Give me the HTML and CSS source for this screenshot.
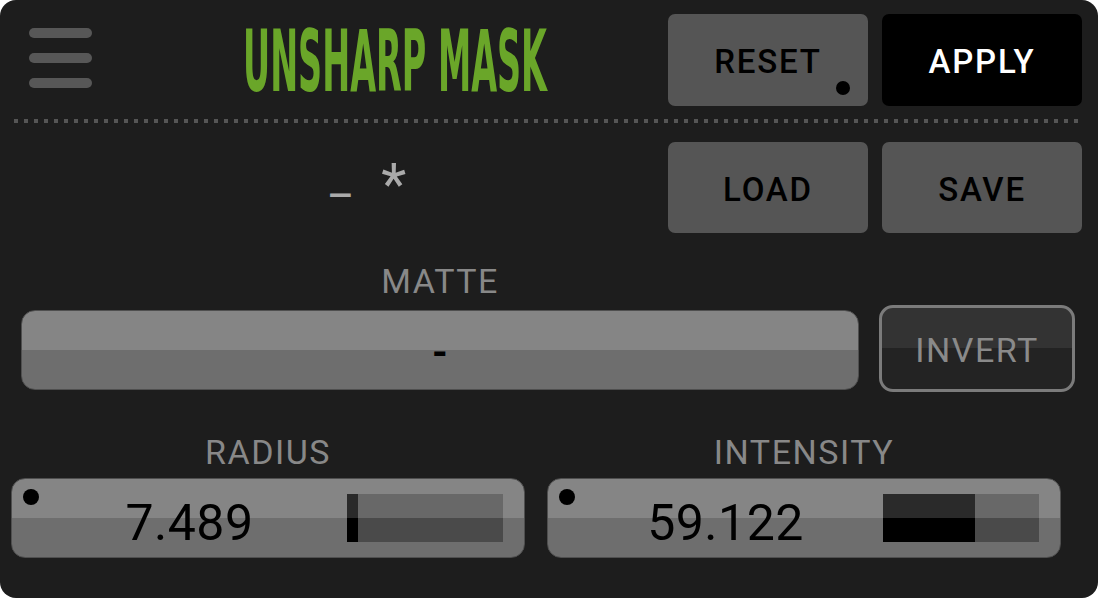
FILE: index.html
```html
<!DOCTYPE html>
<html>
<head>
<meta charset="utf-8">
<link rel="stylesheet" href="styles.css">
</head>
<body>
<div class="panel">
  <div class="header">
    <div class="hamburger"><span></span><span></span><span></span></div>
    <div class="title"><span class="title-text">UNSHARP MASK</span></div>
    <div class="btns">
      <div class="btn">RESET<span class="btn-dot"></span></div>
      <div class="btn btn-apply">APPLY</div>
    </div>
  </div>
  <div class="divider"></div>
  <div class="row2">
    <div class="preset"><span class="preset-name">_</span> <span class="preset-mod">*</span></div>
    <div class="btns">
      <div class="btn">LOAD</div>
      <div class="btn">SAVE</div>
    </div>
  </div>
  <div class="matte">
    <div class="matte-col">
      <div class="label">MATTE</div>
      <div class="field matte-field">-</div>
    </div>
    <div class="invert">INVERT</div>
  </div>
  <div class="sliders">
    <div class="slider">
      <div class="label">RADIUS</div>
      <div class="field slider-field">
        <span class="field-dot"></span>
        <div class="value">7.489</div>
        <div class="bar"><div class="bar-fill" style="width:7%"></div></div>
      </div>
    </div>
    <div class="slider">
      <div class="label">INTENSITY</div>
      <div class="field slider-field">
        <span class="field-dot"></span>
        <div class="value">59.122</div>
        <div class="bar"><div class="bar-fill" style="width:59%"></div></div>
      </div>
    </div>
  </div>
</div>
</body>
</html>
```
FILE: styles.css
```css
html, body {
  margin: 0;
  padding: 0;
  background: #ffffff;
}
.panel {
  width: 1098px;
  height: 598px;
  box-sizing: border-box;
  background: #1d1d1d;
  border-radius: 16px;
  padding-top: 14px;
  font-family: Roboto, "DejaVu Sans", sans-serif;
  overflow: hidden;
}
.header {
  display: flex;
  height: 92px;
  padding-left: 29px;
  padding-right: 16px;
}
.hamburger {
  display: flex;
  flex-direction: column;
  gap: 15px;
  margin-top: 14px;
}
.hamburger span {
  display: block;
  width: 63px;
  height: 10px;
  border-radius: 5px;
  background: #575757;
}
.title {
  width: 302px;
  margin-left: 151px;
  white-space: nowrap;
  height: 92px;
  line-height: 94px;
}
.title-text {
  display: inline-block;
  font-family: "DejaVu Sans Condensed", "DejaVu Sans", sans-serif;
  font-weight: bold;
  font-size: 86px;
  color: #6aa629;
  transform: scaleX(0.432);
  transform-origin: left center;
}
.btns {
  display: flex;
  gap: 14px;
  margin-left: auto;
}
.btn {
  position: relative;
  width: 200px;
  height: 92px;
  border-radius: 7px;
  background: #555555;
  color: #000;
  font-size: 33px;
  font-weight: 500;
  letter-spacing: 1.8px;
  padding-top: 3px;
  box-sizing: border-box;
  display: flex;
  align-items: center;
  justify-content: center;
}
.btn-apply {
  background: #000;
  color: #fff;
}
.btn-dot {
  position: absolute;
  left: 168px;
  top: 67px;
  width: 14px;
  height: 14px;
  border-radius: 50%;
  background: #000;
}
.divider {
  margin: 13px 14px 0 14px;
  height: 4px;
  background-image: linear-gradient(to right, #555 0 4px, transparent 4px 10px);
  background-size: 10px 4px;
}
.row2 {
  display: flex;
  margin-top: 19px;
  height: 91px;
  padding-right: 16px;
}
.row2 .btn {
  height: 91px;
}
.preset {
  padding-left: 330px;
  color: #aaaaaa;
  font-size: 58px;
  line-height: 72px;
  white-space: pre;
}
.preset-name {
  font-size: 46px;
  vertical-align: 10px;
}
.preset-mod {
  margin-left: 16px;
  vertical-align: 0;
}
.matte {
  display: flex;
  align-items: flex-end;
  margin-top: 27px;
  padding-left: 21px;
  gap: 20px;
}
.matte-col {
  width: 838px;
  display: flex;
  flex-direction: column;
  align-items: center;
  gap: 8px;
}
.label {
  color: #888888;
  font-size: 34px;
  letter-spacing: 1.5px;
  line-height: 42px;
}
.field {
  box-sizing: border-box;
  height: 80px;
  border-radius: 14px;
  border: 1px solid #4f4f4f;
  background: linear-gradient(#858585 0 50%, #6e6e6e 50% 100%);
}
.matte-field {
  width: 838px;
  color: #000;
  font-size: 40px;
  font-weight: bold;
  text-align: center;
  line-height: 84px;
}
.invert {
  box-sizing: border-box;
  width: 196px;
  height: 87px;
  margin-bottom: -2px;
  border: 3px solid #7b7b7b;
  border-radius: 14px;
  background: linear-gradient(#333333 0 50%, #232323 50% 100%);
  color: #8a8a8a;
  font-size: 34px;
  letter-spacing: 1.5px;
  padding-top: 2px;
  display: flex;
  align-items: center;
  justify-content: center;
}
.sliders {
  display: flex;
  gap: 22px;
  margin-top: 41px;
  padding-left: 11px;
}
.slider {
  width: 514px;
  display: flex;
  flex-direction: column;
  align-items: center;
  gap: 5px;
}
.slider-field {
  position: relative;
  width: 514px;
  display: flex;
  align-items: center;
  padding-left: 20px;
  padding-right: 21px;
}
.field-dot {
  position: absolute;
  left: 11px;
  top: 10px;
  width: 16px;
  height: 16px;
  border-radius: 50%;
  background: #000;
}
.value {
  flex: 1;
  text-align: center;
  color: #000;
  font-size: 50px;
  letter-spacing: 0.5px;
  padding-top: 9px;
}
.bar {
  width: 156px;
  height: 48px;
  background: linear-gradient(#686868 0 50%, #4a4a4a 50% 100%);
  display: flex;
}
.bar-fill {
  height: 100%;
  background: linear-gradient(#2a2a2a 0 50%, #000 50% 100%);
}
```
